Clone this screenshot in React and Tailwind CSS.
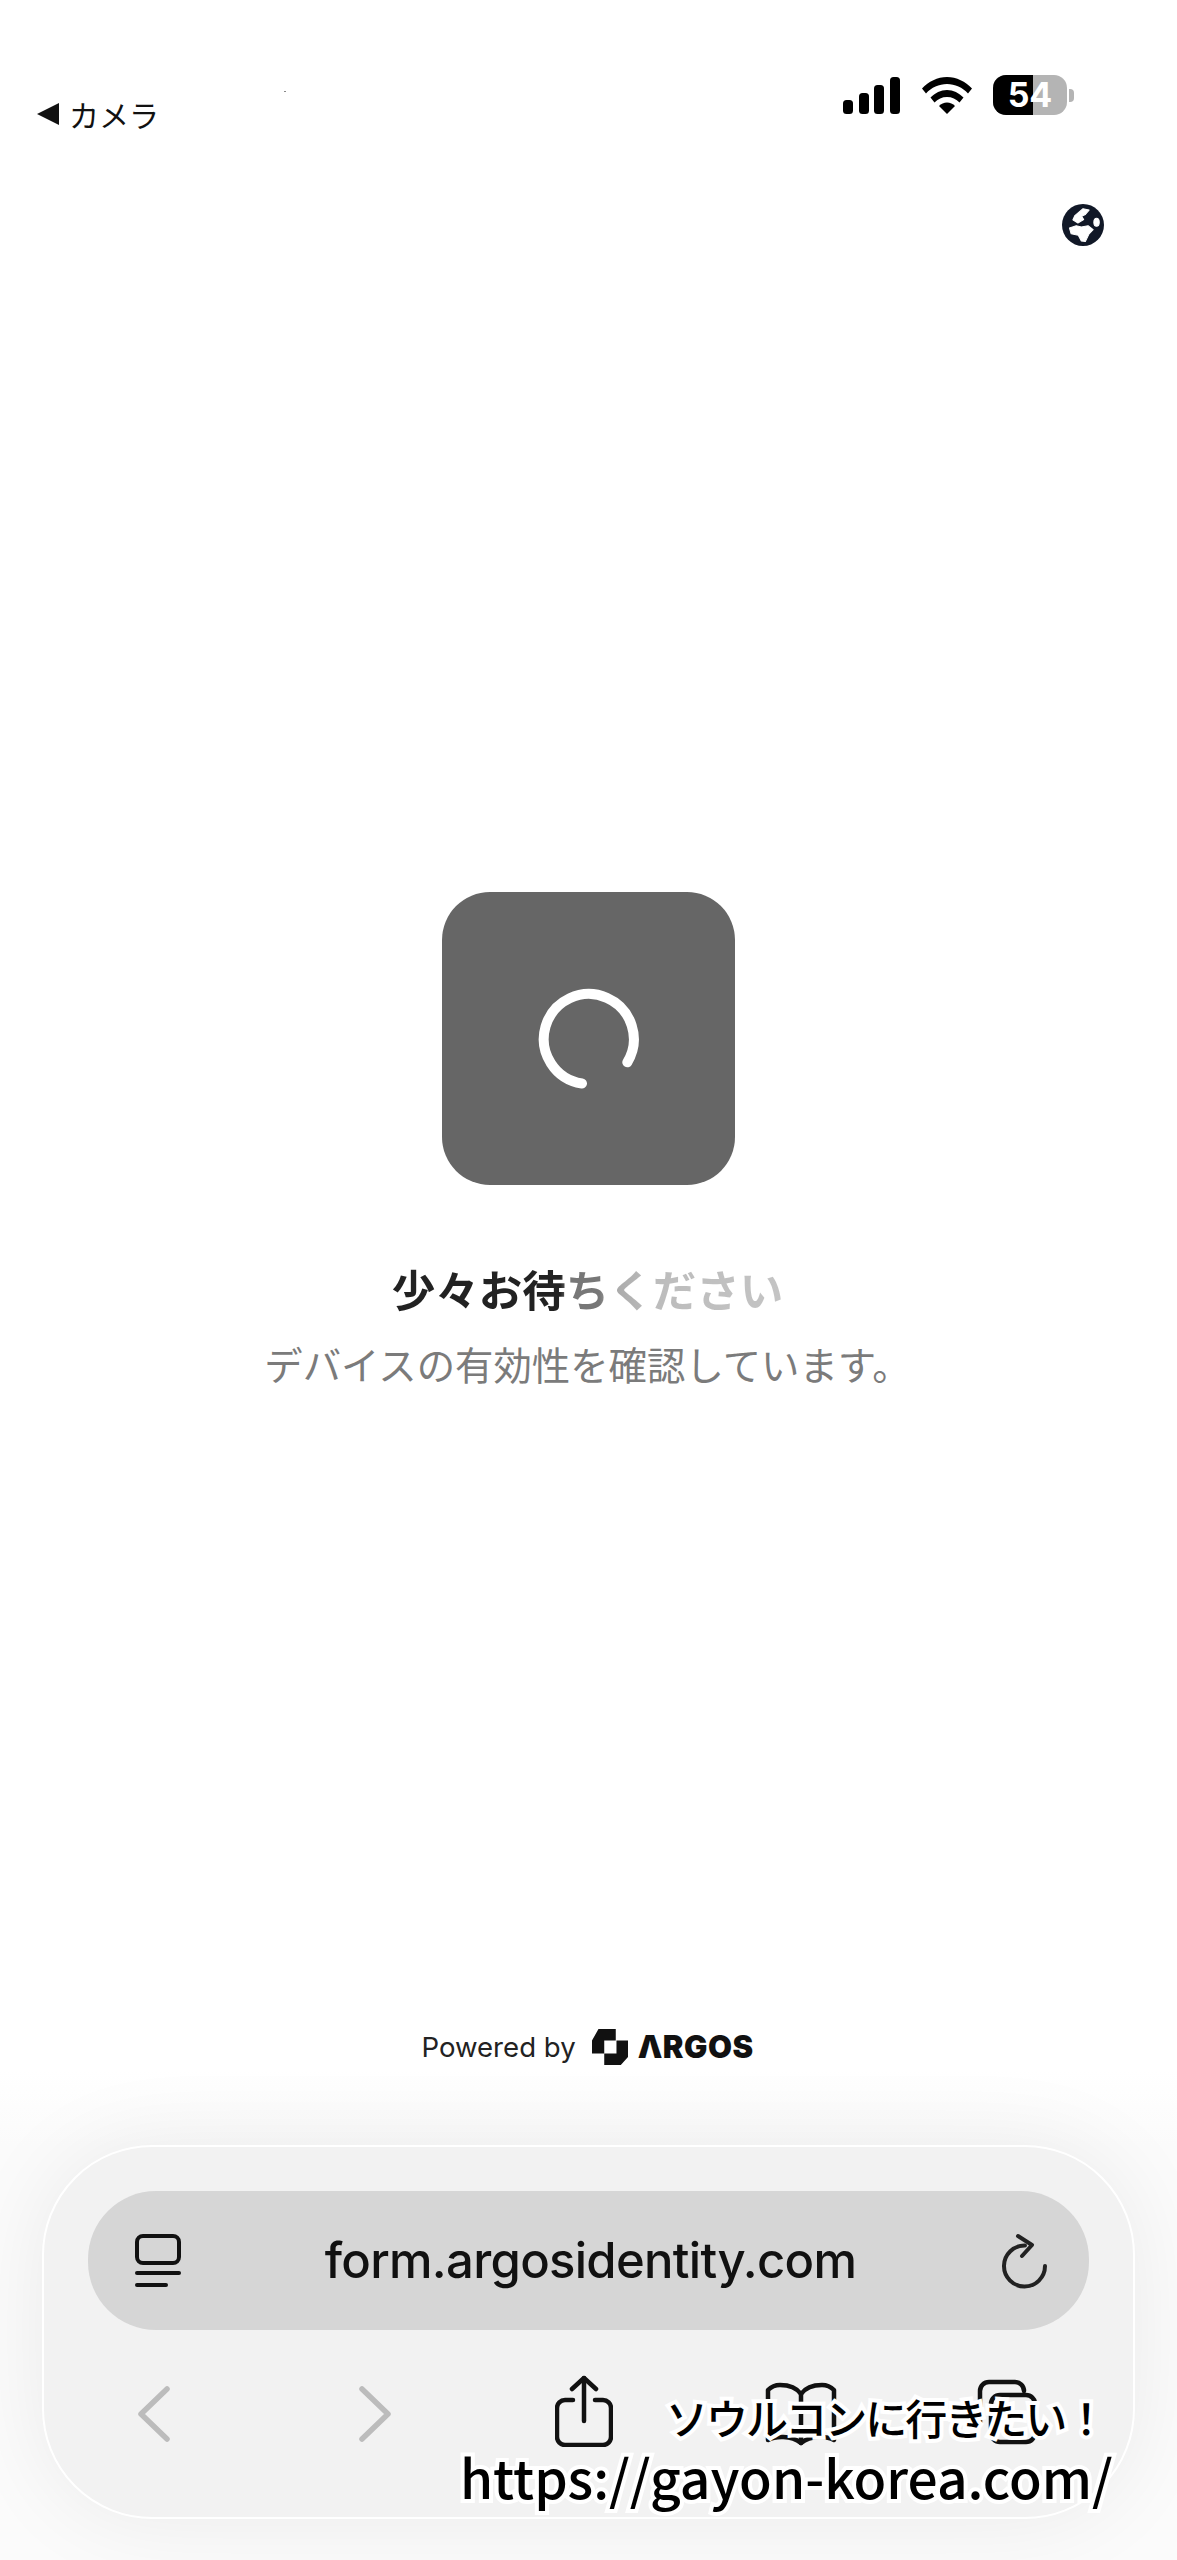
import React from "react";

const jp = "font-['Noto_Sans_CJK_JP','Noto_Sans',sans-serif]";

function Signal() {
  return (
    <svg width="58" height="37" viewBox="0 0 58 37" fill="#000">
      <rect x="0" y="23" width="10" height="14" rx="3.5" />
      <rect x="16" y="16" width="10" height="21" rx="3.5" />
      <rect x="31" y="8" width="10" height="29" rx="3.5" />
      <rect x="47" y="0" width="10" height="37" rx="3.5" />
    </svg>
  );
}

function Wifi() {
  return (
    <svg width="50" height="37" viewBox="0 0 50 37" fill="#000">
      <path d="M0 11.500C6.500 4.500 15.500 0 25 0s18.500 4.500 25 11.500l-4 5C40.500 10.500 33 7 25 7S9.500 10.500 4 16.500z" />
      <path d="M8.500 20.500C13 16 18.800 13 25 13s12 3 16.500 7.500l-4 5C34.300 22 29.800 20 25 20s-9.300 2-12.500 5.500z" />
      <path d="M17 29c2-2 5-3.500 8-3.500s6 1.500 8 3.500l-8 8z" />
    </svg>
  );
}

function Globe() {
  return (
    <svg width="42" height="42" viewBox="22 22 124 124">
      <circle cx="84" cy="84" r="62" fill="#111827" />
      <g fill="#fff" stroke="#fff" strokeWidth="3" strokeLinejoin="round">
        <path d="M84 36L102 40L91 53L80 58L86 68L69 78L54 69L60 56L72 46z" />
        <path d="M44 93L64 86L79 90L99 86L114 98L102 110L91 133L79 131L70 114L49 110z" />
        <ellipse cx="124" cy="76" rx="8" ry="12" />
      </g>
    </svg>
  );
}

function Spinner() {
  return (
    <svg width="110" height="110" viewBox="0 0 110 110" fill="none">
      <path d="M93.300 78.300A45 45 0 1 0 48 99.500" stroke="#fff" strokeWidth="10" strokeLinecap="round" />
    </svg>
  );
}

function Mark() {
  return (
    <svg width="36" height="36" viewBox="0 0 100 100" fill="#111">
      <path d="M18 0H66V32H34V68H0V32z" />
      <path d="M34 100H80L100 78V32H68V68H34z" />
    </svg>
  );
}

function TabIcon() {
  return (
    <svg width="46" height="54" viewBox="0 0 46 54" fill="none" stroke="#111" strokeWidth="4" strokeLinecap="round">
      <rect x="2" y="2" width="42" height="27" rx="6" />
      <path d="M2 39H44" />
      <path d="M2 51H31" />
    </svg>
  );
}

function Reload() {
  return (
    <svg width="46" height="56" viewBox="0 0 46 56" fill="none" stroke="#222" strokeWidth="4" strokeLinecap="round" strokeLinejoin="round">
      <path d="M43 33A20.500 20.500 0 1 1 23 12.500" />
      <path d="M16 3 L30 12 L20 23" />
    </svg>
  );
}

function Chevron({ flip }) {
  return (
    <svg width="34" height="58" viewBox="0 0 34 58" fill="none" stroke="#bcbcbc" strokeWidth="5.500" strokeLinecap="round" strokeLinejoin="round">
      <path d={flip ? "M4 4L30 29L4 54" : "M30 4L4 29L30 54"} />
    </svg>
  );
}

function Share() {
  return (
    <svg width="58" height="72" viewBox="0 0 58 72" fill="none" stroke="#111" strokeWidth="4.500" strokeLinecap="round" strokeLinejoin="round">
      <path d="M18 25H10a8 8 0 0 0-8 8v29a8 8 0 0 0 8 8h38a8 8 0 0 0 8-8V33a8 8 0 0 0-8-8h-8" />
      <path d="M29 46V3" />
      <path d="M17 14L29 3L41 14" />
    </svg>
  );
}

function Book() {
  return (
    <svg width="72" height="64" viewBox="0 0 72 64" fill="none" stroke="#111" strokeWidth="4.500" strokeLinecap="round" strokeLinejoin="round">
      <path d="M36 12C31 5 23 3 15 3 10 3 6 5 3 8V58C10 54 26 53 36 61 46 53 62 54 69 58V8C66 5 62 3 57 3 49 3 41 5 36 12Z" />
      <path d="M36 12V61" />
    </svg>
  );
}

function Tabs() {
  return (
    <svg width="60" height="66" viewBox="0 0 60 66" fill="none" stroke="#111" strokeWidth="4.500" strokeLinecap="round" strokeLinejoin="round">
      <path d="M3 44V12a9 9 0 0 1 9-9h26a9 9 0 0 1 9 9" />
      <rect x="14" y="16" width="44" height="47" rx="9" />
    </svg>
  );
}

export default function App() {
  return (
    <div className="relative w-[1177px] h-[2560px] overflow-hidden flex flex-col bg-[linear-gradient(to_bottom,#ffffff_0,#ffffff_2070px,#fbfbfb_2145px,#fbfbfb_2560px)] font-['Inter','Liberation_Sans',sans-serif]">
      <header className="h-[206px] flex flex-col shrink-0">
        <div className="flex justify-between pt-[75px] pl-[37px] pr-[103px]">
          <div className={`flex items-center gap-[10px] mt-[19px] text-[30px] leading-[40px] text-[#111] ${jp}`}>
            <span className="w-0 h-0 border-y-[11px] border-y-transparent border-r-[22px] border-r-[#111]" />
            <span>カメラ</span>
          </div>
          <div className="flex items-start">
            <div className="mt-[2px] mr-[21px]"><Signal /></div>
            <div className="mt-[2px] mr-[21px]"><Wifi /></div>
            <div className="relative flex items-center">
              <div className="relative w-[74px] h-[40px] rounded-[13px] overflow-hidden bg-[#b4b4b4] flex items-center justify-center">
                <div className="absolute left-0 top-0 bottom-0 w-[40px] bg-black" />
                <span className="relative text-white text-[34px] font-bold leading-none font-['Inter',sans-serif]">54</span>
              </div>
              <div className="ml-[2px] w-[5px] h-[13px] rounded-r-[4px] bg-[#b4b4b4]" />
            </div>
          </div>
        </div>
      </header>

      <div className="flex justify-end pr-[73px] -mt-[2px] h-[46px] shrink-0">
        <Globe />
      </div>

      <main className="flex flex-col items-center pt-[642px]">
        <div className="w-[293px] h-[293px] rounded-[48px] bg-[#666666] flex items-center justify-center">
          <Spinner />
        </div>
        <h1 className={`mt-[74px] -ml-[2px] text-[43.500px] leading-[60px] font-bold text-transparent bg-clip-text bg-[linear-gradient(to_right,#222222_0,#222222_43%,#777777_45%,#777777_53%,#a8a8a8_56%,#bcbcbc_66%,#c4c4c4_100%)] ${jp}`}>
          少々お待ちください
        </h1>
        <p className={`mt-[18px] -ml-[2px] text-[38.400px] leading-[52px] text-[#7b7b7b] ${jp}`}>
          デバイスの有効性を確認しています。
        </p>
      </main>

      <div className="mt-[640px] flex items-center justify-center gap-[16px] -ml-[2px]">
        <span className="text-[27.600px] leading-[36px] text-[#222]">Powered by</span>
        <div className="flex items-center gap-[10px]">
          <Mark />
          <span className="text-[31px] leading-[36px] font-black text-[#111] tracking-[0.5px]">ΛRGOS</span>
        </div>
      </div>

      <section className="mt-[80px] mx-[42px] h-[374px] rounded-[110px] border-[2px] border-white bg-[#f2f2f2] shadow-[0_0_90px_rgba(0,0,0,0.07)] px-[44px] pt-[44px] flex flex-col">
        <div className="h-[139px] rounded-[68px] bg-[#d6d6d6] flex items-center justify-between pl-[47px] pr-[41px]">
          <TabIcon />
          <span className="text-[49px] tracking-[-0.7px] leading-[60px] font-medium text-[#111] -ml-[2px]">form.argosidentity.com</span>
          <Reload />
        </div>
        <div className="mt-[45px] flex items-start">
          <div className="ml-[49px] mt-[10px]"><Chevron /></div>
          <div className="ml-[187px] mt-[10px]"><Chevron flip /></div>
          <div className="ml-[163px]"><Share /></div>
          <div className="ml-[152px] mt-[7px]"><Book /></div>
          <div className="ml-[140px] mt-[4px]"><Tabs /></div>
        </div>
      </section>

      <div className={`absolute left-[666px] top-[2388px] whitespace-nowrap text-[42px] tracking-[-2px] leading-[58px] font-medium text-black [-webkit-text-stroke:8px_white] [paint-order:stroke_fill] ${jp}`}>
        ソウルコンに行きたい！
      </div>
      <div className={`absolute left-[460px] top-[2437px] whitespace-nowrap text-[53.300px] leading-[78px] font-medium text-black [-webkit-text-stroke:8px_white] [paint-order:stroke_fill] ${jp}`}>
        https://gayon-korea.com/
      </div>
      <div className="absolute left-[284px] top-[91px] w-[2px] h-[1px] bg-[#888]" />
    </div>
  );
}
